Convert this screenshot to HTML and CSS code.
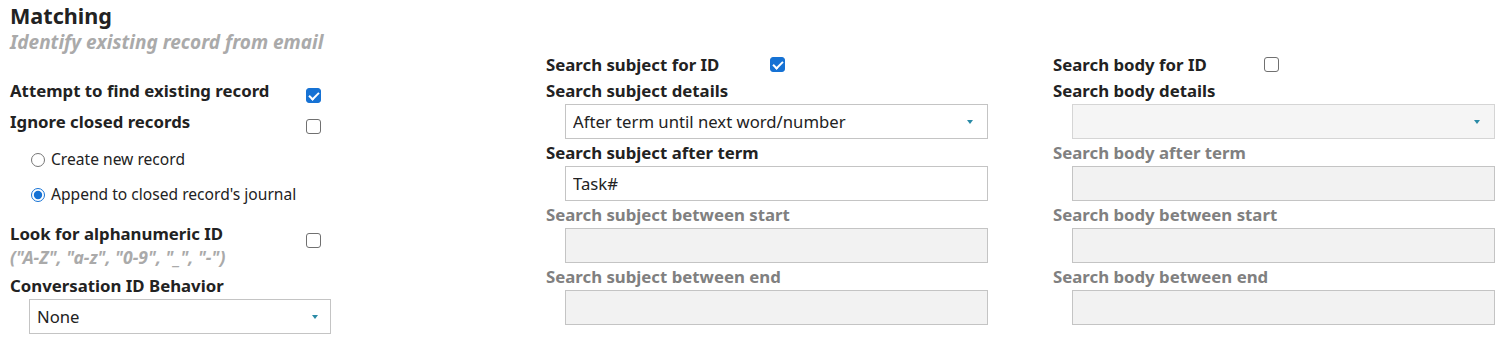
FILE: index.html
```html
<!DOCTYPE html>
<html lang="en">
<head>
  <meta charset="UTF-8">
  <meta name="viewport" content="width=device-width, initial-scale=1.0">
  <title>Matching</title>
  <link rel="stylesheet" href="styles.css">
</head>
<body>
  <div class="matching">
    <div class="col col-main">
      <h2 class="title">Matching</h2>
      <div class="subtitle">Identify existing record from email</div>

      <div class="check-row first">
        <label class="check-label" for="attempt">Attempt to find existing record</label>
        <input type="checkbox" class="box" id="attempt" checked>
      </div>
      <div class="check-row">
        <label class="check-label" for="ignore">Ignore closed records</label>
        <input type="checkbox" class="box" id="ignore">
      </div>

      <div class="radios">
        <label class="radio"><input type="radio" name="closed"> Create new record</label>
        <label class="radio"><input type="radio" name="closed" checked> Append to closed record's journal</label>
      </div>

      <div class="check-row alnum">
        <label class="check-label" for="alnum">Look for alphanumeric ID</label>
        <input type="checkbox" class="box" id="alnum">
      </div>
      <div class="hint">("A-Z", "a-z", "0-9", "_", "-")</div>

      <div class="field-label conv">Conversation ID Behavior</div>
      <div class="select small">
        <select>
          <option>None</option>
        </select>
      </div>
    </div>

    <div class="col col-subject">
      <div class="id-row">
        <label class="id-label" for="subj-id">Search subject for ID</label>
        <input type="checkbox" class="box" id="subj-id" checked>
      </div>
      <div class="field-label">Search subject details</div>
      <div class="select">
        <select>
          <option>After term until next word/number</option>
        </select>
      </div>
      <div class="field-label">Search subject after term</div>
      <input class="text" type="text" value="Task#">
      <div class="field-label muted">Search subject between start</div>
      <input class="text" type="text" disabled>
      <div class="field-label muted">Search subject between end</div>
      <input class="text" type="text" disabled>
    </div>

    <div class="col col-body">
      <div class="id-row">
        <label class="id-label" for="body-id">Search body for ID</label>
        <input type="checkbox" class="box" id="body-id">
      </div>
      <div class="field-label">Search body details</div>
      <div class="select">
        <select disabled>
          <option></option>
        </select>
      </div>
      <div class="field-label muted">Search body after term</div>
      <input class="text" type="text" disabled>
      <div class="field-label muted">Search body between start</div>
      <input class="text" type="text" disabled>
      <div class="field-label muted">Search body between end</div>
      <input class="text" type="text" disabled>
    </div>
  </div>
</body>
</html>
```

FILE: styles.css
```css
body { margin: 0; padding: 0; background: #ffffff; font-family: "Noto Sans", "Open Sans", sans-serif; color: #222222; }
.matching { display: grid; grid-template-columns: 536px 507px 1fr; padding-left: 10px; }
.col { display: flex; flex-direction: column; align-items: flex-start; }
.col-subject, .col-body { padding-top: 52px; }

.title { font-size: 21.6px; font-weight: 700; line-height: 28px; margin: 2px 0 0; color: #222222; }
.subtitle { font-size: 19px; font-weight: 700; font-style: italic; line-height: 24px; color: #aaaaaa; }

.check-row { display: flex; align-items: flex-start; height: 31px; }
.check-row.first { margin-top: 22px; }
.check-label { width: 296px; font-size: 16.8px; font-weight: 700; line-height: 30px; }
.check-row .box { margin-top: 12px; }

.box { appearance: none; width: 15px; height: 15px; margin: 0; border: 1px solid #707070; border-radius: 3px; background: #ffffff; position: relative; flex-shrink: 0; }
.box:checked { background: #1672d4; border-color: #1672d4; }
.box:checked::after { content: ""; position: absolute; left: 4px; top: 1px; width: 4px; height: 8px; border: solid #ffffff; border-width: 0 2px 2px 0; transform: rotate(45deg); }

.radios { display: flex; flex-direction: column; margin-top: 3px; padding-left: 21px; }
.radio { display: flex; align-items: center; height: 35px; font-size: 15.6px; }
.radio input { width: 14px; height: 14px; margin: 3px 6px 0 0; accent-color: #1672d4; }

.check-row.alnum { margin-top: 10px; height: 26px; }
.alnum .check-label { line-height: 26px; }
.alnum .box { margin-top: 12px; }
.hint { font-size: 17.5px; font-weight: 700; font-style: italic; line-height: 20px; color: #aaaaaa; }

.field-label { font-size: 16.8px; font-weight: 700; line-height: 26px; color: #222222; }
.field-label.muted { color: #808080; }
.field-label.conv { margin-top: 6px; }

.id-row { display: flex; align-items: flex-start; height: 26px; }
.id-label { font-size: 16.8px; font-weight: 700; line-height: 26px; width: 224px; }
.col-body .id-label { width: 211px; }
.id-row .box { margin-top: 5px; }

.select { position: relative; margin-left: 19px; margin-bottom: 1px; }
.select select { appearance: none; display: block; width: 423px; height: 35px; margin: 0; padding: 0 30px 0 7px; border: 1px solid #c4c4c4; border-radius: 0; background: #ffffff; font-family: inherit; font-size: 16.7px; color: #222222; }
.select select:disabled { background: #f2f2f2; }
.select::after { content: ""; position: absolute; right: 15px; top: 16px; border-left: 3.5px solid transparent; border-right: 3.5px solid transparent; border-top: 4px solid #2a8aa6; }
.select.small select { width: 302px; }
.select.small::after { right: 13px; }

.text { display: block; box-sizing: border-box; width: 423px; height: 35px; margin: 0 0 1px 19px; padding: 0 7px; border: 1px solid #c4c4c4; background: #ffffff; font-family: inherit; font-size: 16.7px; color: #222222; outline: none; }
.text:disabled { background: #f2f2f2; }
```
